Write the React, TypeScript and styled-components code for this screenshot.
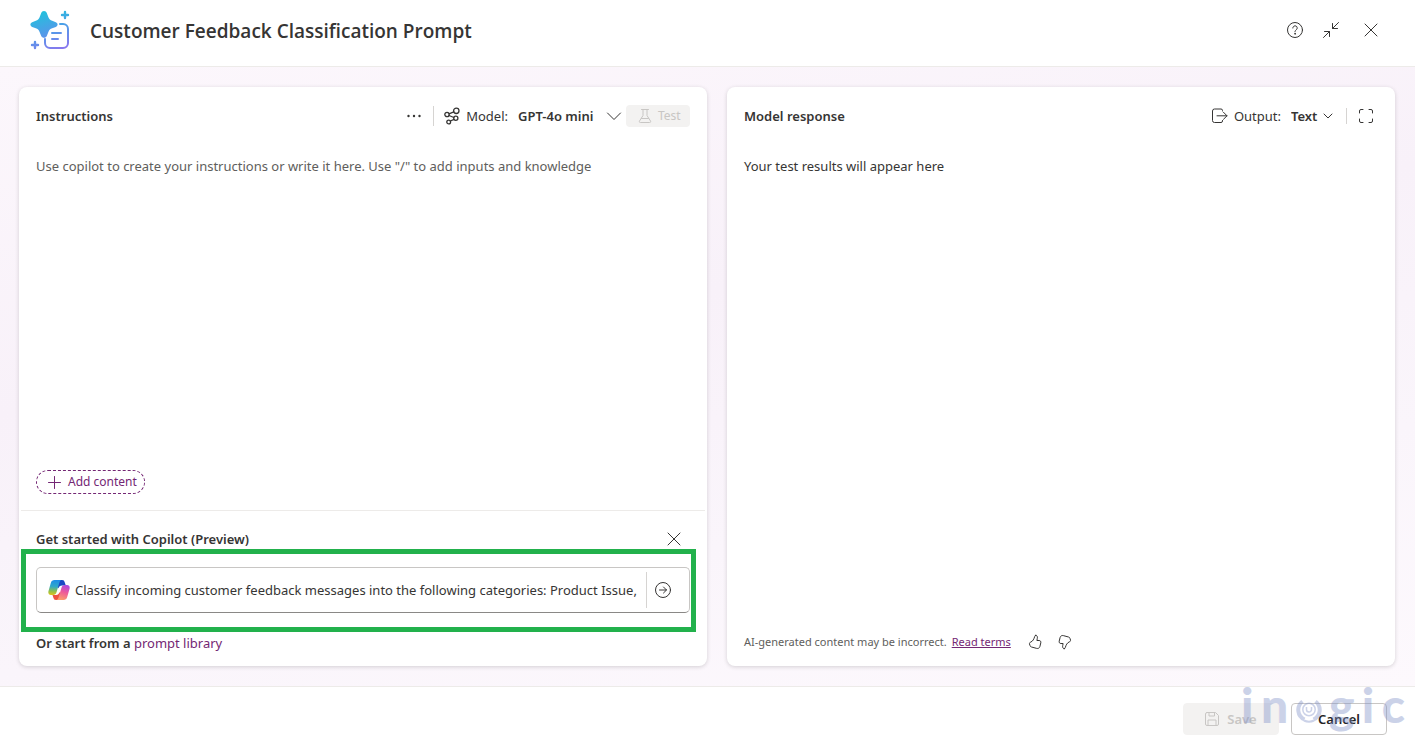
import React from "react";
import styled, { createGlobalStyle } from "styled-components";

const Global = createGlobalStyle`
  *, *::before, *::after { box-sizing: border-box; }
  html, body { margin: 0; }
  body, button, input, textarea, select {
    font-family: "Noto Sans", "Open Sans", sans-serif;
    font-size: 13px;
    line-height: 20px;
    color: #363534;
  }
  button { padding: 0; border: 0; background: none; cursor: pointer; }
  h1, h2, h3, p { margin: 0; }
`;

const Page = styled.div`
  display: flex;
  flex-direction: column;
  min-height: 100vh;
  background: #fff;
`;

const Header = styled.header`
  display: flex;
  align-items: center;
  height: 67px;
  padding: 0 34px 6px 30px;
  border-bottom: 1px solid #edebe9;
`;

const Title = styled.h1`
  flex: 1;
  margin-left: 20px;
  padding-top: 2px;
  font-family: "Open Sans", "Noto Sans", sans-serif;
  font-size: 19px;
  line-height: 28px;
  font-weight: 600;
`;

const HeaderActions = styled.div`
  display: flex;
  align-items: center;
  gap: 16px;
  & > :last-child { margin-left: 4px; }
`;

const IconButton = styled.button`
  display: flex;
  align-items: center;
  justify-content: center;
  flex: none;
  width: 20px;
  height: 20px;
`;

const Workspace = styled.main`
  flex: 1;
  display: grid;
  grid-template-columns: 688fr 668fr;
  gap: 20px;
  padding: 20px 20px 20px 19px;
  background: linear-gradient(170deg, #fcf7fc 0%, #f8f1f9 40%, #faf5fb 70%, #fdf9fd 100%);
`;

const Card = styled.section`
  display: flex;
  flex-direction: column;
  min-width: 0;
  border-radius: 8px;
  background: #fff;
  box-shadow: 0 1px 4px rgba(0, 0, 0, 0.16);
`;

const CardHeader = styled.div<{ $right?: number }>`
  display: flex;
  align-items: center;
  height: 60px;
  padding: 0 ${(p) => p.$right ?? 17}px 2px 17px;
`;

const CardTitle = styled.h2`
  flex: 1;
  font-size: 13px;
  line-height: 20px;
  font-weight: 600;
`;

const Divider = styled.span<{ $height: number; $before?: number; $after?: number }>`
  flex: none;
  width: 1px;
  height: ${(p) => p.$height}px;
  margin: 0 ${(p) => p.$after ?? 0}px 0 ${(p) => p.$before ?? 0}px;
  background: #d6d4d2;
`;

const Picker = styled.label`
  display: flex;
  align-items: center;
  gap: 6px;
  white-space: nowrap;
`;

const SelectWrap = styled.span<{ $width: number }>`
  display: grid;
  grid-template-columns: 1fr auto;
  align-items: center;
  width: ${(p) => p.$width}px;
  margin-left: 4px;
  & > * { grid-row: 1; }
  & > svg { grid-column: 2; pointer-events: none; }
`;

const Select = styled.select`
  grid-column: 1 / 3;
  width: 100%;
  padding: 0;
  border: 0;
  background: none;
  font-weight: 600;
  appearance: none;
`;

const TestButton = styled.button`
  display: flex;
  align-items: center;
  gap: 6px;
  width: 64px;
  height: 22px;
  margin-left: 4px;
  padding-left: 12px;
  border-radius: 4px;
  background: #f3f2f1;
  color: #c8c6c4;
  font-size: 12px;
  line-height: 16px;
`;

const Editor = styled.textarea`
  flex: 1;
  display: block;
  margin: 9px 17px 0;
  padding: 0;
  border: 0;
  outline: 0;
  resize: none;
  background: none;
  &::placeholder { color: #605e5c; opacity: 1; }
`;

const AddContent = styled.button`
  display: flex;
  align-items: center;
  gap: 7px;
  align-self: flex-start;
  height: 24px;
  margin: 0 17px 16px;
  padding: 0 7px 0 11px;
  border: 1px dashed #742774;
  border-radius: 12px;
  color: #742774;
  font-size: 12px;
  line-height: 16px;
`;

const Copilot = styled.div`
  display: flex;
  flex-direction: column;
  margin: 0 2px;
  padding: 18px 15px 13px;
  border-top: 1px solid #edebe9;
`;

const CopilotHead = styled.div`
  display: flex;
  align-items: center;
  justify-content: space-between;
  padding-right: 6px;
`;

const CopilotTitle = styled.h3`
  font-size: 13px;
  line-height: 20px;
  font-weight: 600;
`;

const Highlight = styled.div`
  position: relative;
  margin: 18px 0 20px;
  &::after {
    content: "";
    position: absolute;
    inset: -18px -6px -19px -15px;
    border: 5px solid #22b14c;
    pointer-events: none;
  }
`;

const PromptBox = styled.div`
  display: flex;
  align-items: center;
  height: 46px;
  padding: 0 16px 0 11px;
  border: 1px solid #c8c6c4;
  border-bottom-color: #8a8886;
  border-radius: 5px;
`;

const PromptInput = styled.input`
  flex: 1;
  min-width: 0;
  margin: 0 0 0 5px;
  padding: 0;
  border: 0;
  outline: 0;
  background: none;
`;

const Library = styled.p`
  font-weight: 600;
`;

const Link = styled.a<{ $underline?: boolean }>`
  color: #742774;
  font-weight: 400;
  text-decoration: ${(p) => (p.$underline ? "underline" : "none")};
`;

const Result = styled.p`
  flex: 1;
  padding: 9px 17px;
`;

const Disclaimer = styled.div`
  display: flex;
  align-items: center;
  padding: 0 17px 14px;
  color: #605e5c;
  font-size: 11px;
  line-height: 20px;
  & > a { margin-left: 5px; }
`;

const Feedback = styled.div`
  display: flex;
  gap: 10px;
  margin-left: 14px;
`;

const Footer = styled.footer`
  position: relative;
  display: flex;
  justify-content: flex-end;
  gap: 12px;
  height: 63px;
  padding: 16px 28px 14px;
  border-top: 1px solid #edebe9;
`;

const FooterButton = styled.button<{ $outlined?: boolean }>`
  display: flex;
  align-items: center;
  justify-content: center;
  gap: 8px;
  width: 96px;
  height: 32px;
  border: 1px solid ${(p) => (p.$outlined ? "#c8c6c4" : "#f3f2f1")};
  border-radius: 4px;
  background: ${(p) => (p.$outlined ? "#fff" : "#f3f2f1")};
  color: ${(p) => (p.$outlined ? "#242424" : "#c8c6c4")};
  font-weight: 600;
`;

const Watermark = styled.div`
  position: absolute;
  top: 0;
  right: 10px;
  display: flex;
  align-items: center;
  justify-content: space-between;
  width: 164px;
  height: 36px;
  font-family: Lato, sans-serif;
  font-size: 48px;
  line-height: 36px;
  font-weight: 900;
  color: #8090c8;
  opacity: 0.4;
  pointer-events: none;
  & > svg { align-self: flex-end; }
`;

const stroke = { fill: "none", stroke: "currentColor", strokeLinecap: "round", strokeLinejoin: "round" } as const;

const AppLogo = () => (
  <svg width="40" height="40" viewBox="0 0 40 40" fill="none" aria-hidden="true">
    <defs>
      <linearGradient id="app" x1="14" y1="0" x2="28" y2="40" gradientUnits="userSpaceOnUse">
        <stop offset="0" stopColor="#21c2dc" />
        <stop offset="0.5" stopColor="#4f9de8" />
        <stop offset="1" stopColor="#8877ee" />
      </linearGradient>
    </defs>
    <path fill="url(#app)" d="M14 1c1.400 0 2.300.8 2.800 2l1.600 4.200c.8 1.900 1.900 2.900 3.800 3.600l3.600 1.400c2.400 1 2.400 3.700 0 4.700l-3.600 1.400c-1.900.7-3 1.700-3.800 3.600l-1.600 4c-1 2.400-4.600 2.400-5.600 0l-1.600-4c-.8-1.900-1.900-2.900-3.800-3.600L2.200 16.900c-2.400-1-2.400-3.700 0-4.700l3.600-1.400c1.900-.7 3-1.700 3.800-3.600L11.200 3c.5-1.200 1.400-2 2.800-2z" />
    <g stroke="url(#app)" strokeWidth="2" strokeLinecap="round">
      <path d="M35 2v6M32 5h6M5 32v6M2 35h6" strokeWidth="2.400" />
      <path d="M30 14h3a5 5 0 0 1 5 5v14a5 5 0 0 1-5 5H20a5 5 0 0 1-5-5v-4M22 23h9M22 29h6" />
    </g>
  </svg>
);

const HelpIcon = () => (
  <svg width="18" height="18" viewBox="0 0 18 18" {...stroke} aria-hidden="true">
    <circle cx="9" cy="9" r="7.500" />
    <path d="M6.800 7a2.200 2.200 0 1 1 3.600 1.700C9.500 9.400 9 9.700 9 10.800" />
    <circle cx="9" cy="12.800" r=".4" fill="currentColor" />
  </svg>
);

const CollapseIcon = () => (
  <svg width="18" height="18" viewBox="0 0 18 18" {...stroke} aria-hidden="true">
    <path d="M16.500 1.500l-6 6M10.500 2.500v5h5M1.500 16.500l6-6M2.500 10.500h5v5" />
  </svg>
);

const CloseIcon = () => (
  <svg width="14" height="14" viewBox="0 0 14 14" {...stroke} aria-hidden="true">
    <path d="M1 1l12 12M13 1L1 13" />
  </svg>
);

const MoreIcon = () => (
  <svg width="16" height="4" viewBox="0 0 16 4" fill="currentColor" aria-hidden="true">
    <circle cx="2.500" cy="2" r="1.200" />
    <circle cx="8" cy="2" r="1.200" />
    <circle cx="13.500" cy="2" r="1.200" />
  </svg>
);

const ModelIcon = () => (
  <svg width="16" height="18" viewBox="0 0 16 18" {...stroke} strokeWidth="1.300" aria-hidden="true">
    <circle cx="12.300" cy="3.800" r="2.700" />
    <circle cx="3" cy="7.500" r="2.200" />
    <circle cx="11.800" cy="11.300" r="2.100" />
    <circle cx="4.700" cy="15" r="1.900" />
    <path d="M5 6.800l4.800-1.900M5 8.500l4.900 2M6.300 14l3.800-1.600" />
  </svg>
);

const ChevronIcon = ({ size }: { size: number }) => (
  <svg width={size} height={size} viewBox={`0 0 ${size} ${size}`} {...stroke} aria-hidden="true">
    <path d={size === 16 ? "M1.500 5L8 11.500 14.500 5" : "M1 3l4 4 4-4"} />
  </svg>
);

const FlaskIcon = () => (
  <svg width="14" height="14" viewBox="0 0 14 14" {...stroke} aria-hidden="true">
    <path d="M3.500.5h7M5 .5v6L1.500 12c-.5 1 0 1.500.8 1.500h9.400c.8 0 1.300-.5.8-1.500L9 6.500v-6M3.500 9.500h7" />
  </svg>
);

const OutputIcon = () => (
  <svg width="16" height="16" viewBox="0 0 16 16" {...stroke} aria-hidden="true">
    <path d="M10.500 3V2.500a1.500 1.500 0 0 0-1.500-1.500H2.500A2 2 0 0 0 .5 3v9.500a2 2 0 0 0 2 2H9a1.500 1.500 0 0 0 1.500-1.500v-.5M5 7.800h10M11.500 4.300L15 7.800l-3.500 3.500" />
  </svg>
);

const ExpandIcon = () => (
  <svg width="16" height="16" viewBox="0 0 16 16" {...stroke} aria-hidden="true">
    <path d="M1.500 5V3a1.500 1.500 0 0 1 1.500-1.500h2M11 1.500h2A1.500 1.500 0 0 1 14.500 3v2M14.500 11v2a1.500 1.500 0 0 1-1.500 1.500h-2M5 14.500H3A1.500 1.500 0 0 1 1.500 13v-2" />
  </svg>
);

const PlusIcon = () => (
  <svg width="13" height="13" viewBox="0 0 13 13" {...stroke} aria-hidden="true">
    <path d="M6.500.5v12M.5 6.500h12" />
  </svg>
);

const CopilotIcon = () => (
  <svg width="22" height="22" viewBox="0 0 22 22" aria-hidden="true">
    <defs>
      <linearGradient id="cpLeft" x1="5" y1="1" x2="4" y2="17" gradientUnits="userSpaceOnUse">
        <stop offset="0" stopColor="#1c8de8" />
        <stop offset="0.400" stopColor="#2fa8c8" />
        <stop offset="0.700" stopColor="#8fc04c" />
        <stop offset="1" stopColor="#f2c60c" />
      </linearGradient>
      <linearGradient id="cpRight" x1="18" y1="5" x2="13" y2="21" gradientUnits="userSpaceOnUse">
        <stop offset="0" stopColor="#a548ea" />
        <stop offset="0.500" stopColor="#ee5a9a" />
        <stop offset="1" stopColor="#fba06a" />
      </linearGradient>
    </defs>
    <path fill="#1b49c4" d="M9 1h5c1.700 0 2.300.8 2.800 2.500L17.800 6.500H14c-2 0-2.900 1-3.500 3L9 6z" />
    <path fill="#ee5340" d="M13 21H8c-1.500 0-2.200-.8-2.700-2.500L4.500 16H8c2 0 2.900-1 3.500-3L13 16z" />
    <path fill="url(#cpLeft)" d="M6.500 1h7c-1.300.3-1.800 1.600-2.200 3L8.600 13c-.7 2.200-1.600 3-3.500 3H3c-2.300 0-3.100-1.800-2.500-4l2.300-8C3.500 1.800 4.600 1 6.500 1z" />
    <path fill="url(#cpRight)" d="M15.500 21h-7c1.300-.3 1.800-1.600 2.200-3l2.700-9c.7-2.200 1.600-3 3.500-3H19c2.300 0 3.100 1.800 2.500 4l-2.300 8c-.7 2.200-1.800 3-3.700 3z" />
    <path fill="#fff" d="M12.800 7c-1.200.6-2 1.800-2.500 3.500L9 15.200c1.300-.6 2.100-1.700 2.600-3.400z" />
  </svg>
);

const SendIcon = () => (
  <svg width="18" height="18" viewBox="0 0 18 18" {...stroke} aria-hidden="true">
    <circle cx="9" cy="9" r="7.500" />
    <path d="M5.500 9h7M9.500 6l3 3-3 3" />
  </svg>
);

const ThumbIcon = ({ down = false }: { down?: boolean }) => (
  <svg width="14" height="16" viewBox="0 0 14 16" {...stroke} aria-hidden="true">
    <g transform={down ? "rotate(180 7 8)" : undefined}>
      <path d="M7.800 1.300c1.400 0 1.800 1.500 1.500 3L8.900 6.500h2.200c1.300 0 2 1 1.700 2.300l-.9 3.700c-.4 1.500-1.700 2.300-3.200 1.900L3.500 13C2.600 12.800 2.200 12.300 2 11.500L1.500 10c-.2-.9.3-1.600 1.200-1.900C4.800 7.300 6 5 6.700 2.500c.2-.8.5-1.200 1.100-1.200z" />
    </g>
  </svg>
);

const SaveIcon = () => (
  <svg width="14" height="14" viewBox="0 0 14 14" {...stroke} aria-hidden="true">
    <path d="M2 .5h8.500l3 3V12a1.500 1.500 0 0 1-1.500 1.500H2A1.500 1.500 0 0 1 .5 12V2A1.500 1.500 0 0 1 2 .5zM4 .5V4h5.500V.5M3 13.500V8h8v5.500" />
  </svg>
);

const RingIcon = () => (
  <svg width="26" height="26" viewBox="0 0 26 26" fill="none" stroke="currentColor" aria-hidden="true">
    <path strokeWidth="4" d="M6.500 4.500a10.500 10.500 0 0 0 2 18M19.500 4.500a10.500 10.500 0 0 1-2 18" />
    <path strokeWidth="2" d="M8 23.500a11 11 0 0 0 10 0" />
    <circle cx="13" cy="12.500" r="6.200" strokeWidth="1.500" />
    <path strokeWidth="1.500" d="M10.500 10v2.500a2.500 2.500 0 0 0 5 0V10" />
  </svg>
);

export default function App() {
  return (
    <Page>
      <Global />
      <Header>
        <AppLogo />
        <Title>Customer Feedback Classification Prompt</Title>
        <HeaderActions>
          <IconButton aria-label="Help"><HelpIcon /></IconButton>
          <IconButton aria-label="Exit full screen"><CollapseIcon /></IconButton>
          <IconButton aria-label="Close"><CloseIcon /></IconButton>
        </HeaderActions>
      </Header>

      <Workspace>
        <Card>
          <CardHeader>
            <CardTitle>Instructions</CardTitle>
            <IconButton aria-label="More options"><MoreIcon /></IconButton>
            <Divider $height={20} $before={9} $after={10} />
            <Picker>
              <ModelIcon />
              Model:
              <SelectWrap $width={104}>
                <Select defaultValue="GPT-4o mini"><option>GPT-4o mini</option></Select>
                <ChevronIcon size={16} />
              </SelectWrap>
            </Picker>
            <TestButton disabled><FlaskIcon />Test</TestButton>
          </CardHeader>
          <Editor
            aria-label="Instructions"
            placeholder={'Use copilot to create your instructions or write it here. Use "/" to add inputs and knowledge'}
          />
          <AddContent><PlusIcon />Add content</AddContent>
          <Copilot>
            <CopilotHead>
              <CopilotTitle>Get started with Copilot (Preview)</CopilotTitle>
              <IconButton aria-label="Dismiss"><CloseIcon /></IconButton>
            </CopilotHead>
            <Highlight>
              <PromptBox>
                <CopilotIcon />
                <PromptInput
                  aria-label="Describe your prompt"
                  defaultValue="Classify incoming customer feedback messages into the following categories: Product Issue,"
                />
                <Divider $height={36} $before={4} $after={6} />
                <IconButton aria-label="Generate"><SendIcon /></IconButton>
              </PromptBox>
            </Highlight>
            <Library>Or start from a <Link href="#library">prompt library</Link></Library>
          </Copilot>
        </Card>

        <Card>
          <CardHeader $right={19}>
            <CardTitle>Model response</CardTitle>
            <Picker>
              <OutputIcon />
              Output:
              <SelectWrap $width={42}>
                <Select defaultValue="Text"><option>Text</option></Select>
                <ChevronIcon size={10} />
              </SelectWrap>
            </Picker>
            <Divider $height={16} $before={13} $after={9} />
            <IconButton aria-label="Expand"><ExpandIcon /></IconButton>
          </CardHeader>
          <Result>Your test results will appear here</Result>
          <Disclaimer>
            AI-generated content may be incorrect.
            <Link href="#terms" $underline>Read terms</Link>
            <Feedback>
              <IconButton aria-label="Like"><ThumbIcon /></IconButton>
              <IconButton aria-label="Dislike"><ThumbIcon down /></IconButton>
            </Feedback>
          </Disclaimer>
        </Card>
      </Workspace>

      <Footer>
        <FooterButton disabled><SaveIcon />Save</FooterButton>
        <FooterButton $outlined>Cancel</FooterButton>
        <Watermark>
          <span>i</span><span>n</span><RingIcon /><span>g</span><span>i</span><span>c</span>
        </Watermark>
      </Footer>
    </Page>
  );
}
